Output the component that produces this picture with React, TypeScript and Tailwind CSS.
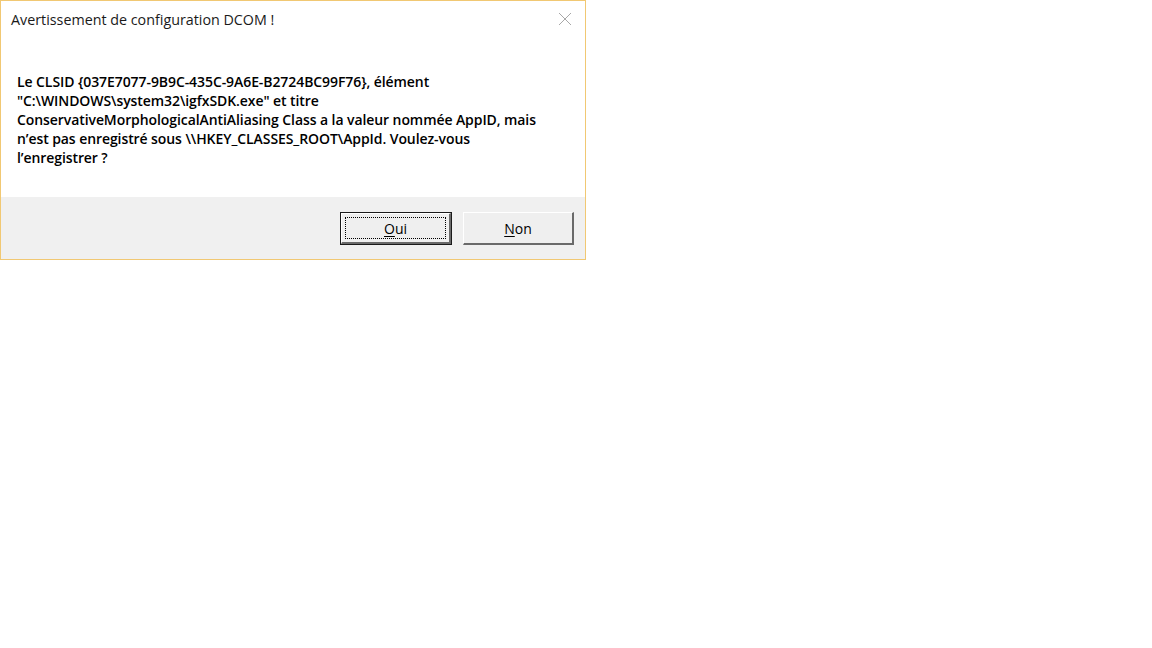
export default function App() {
  return (
    <div className="w-[1152px] h-[648px] bg-white" style={{ fontFamily: '"Open Sans", "Noto Sans", sans-serif' }}>
      <div className="w-[586px] h-[260px] border border-[#f1c873] flex flex-col bg-white">
        <div className="h-[36px] flex items-start justify-between">
          <div className="pl-[10px] pt-[9px] text-[14.3px] leading-[20px] text-[#1a1a1a]">
            Avertissement de configuration DCOM !
          </div>
          <div className="mr-[13px] mt-[11px] w-[14px] h-[14px]">
            <svg width="14" height="14" viewBox="0 0 14 14">
              <path d="M1 1 L13 13 M13 1 L1 13" stroke="#a8a8a8" strokeWidth="1" fill="none" />
            </svg>
          </div>
        </div>
        <div className="h-[160px] pl-[16px] pt-[35px] text-[14px] leading-[19px] font-semibold text-black tracking-[-0.08px]">
          <div>Le CLSID {'{037E7077-9B9C-435C-9A6E-B2724BC99F76}'}, élément</div>
          <div>"C:\WINDOWS\system32\igfxSDK.exe" et titre</div>
          <div>ConservativeMorphologicalAntiAliasing Class a la valeur nommée AppID, mais</div>
          <div>n’est pas enregistré sous \\HKEY_CLASSES_ROOT\AppId. Voulez-vous</div>
          <div>l’enregistrer ?</div>
        </div>
        <div className="flex-1 bg-[#f0f0f0] flex justify-end items-start pt-[15px] pr-[11px] gap-[11px]">
          <button className="w-[112px] h-[33px] border border-[#1a1a1a] bg-[#efefef] p-0">
            <div className="w-full h-full border-t border-l border-white border-r-[2px] border-b-[2px] border-r-[#6a6a6a] border-b-[#6a6a6a] p-[3px]">
              <div className="w-full h-full border border-dotted border-black flex items-center justify-center text-[14px] text-black">
                <span><span className="underline underline-offset-2">O</span>ui</span>
              </div>
            </div>
          </button>
          <button className="w-[111px] h-[33px] bg-[#efefef] p-0 border-t border-l border-white border-r-[2px] border-b-[2px] border-r-[#6a6a6a] border-b-[#6a6a6a]">
            <div className="w-full h-full flex items-center justify-center text-[14px] text-black">
              <span><span className="underline underline-offset-2">N</span>on</span>
            </div>
          </button>
        </div>
      </div>
    </div>
  );
}
